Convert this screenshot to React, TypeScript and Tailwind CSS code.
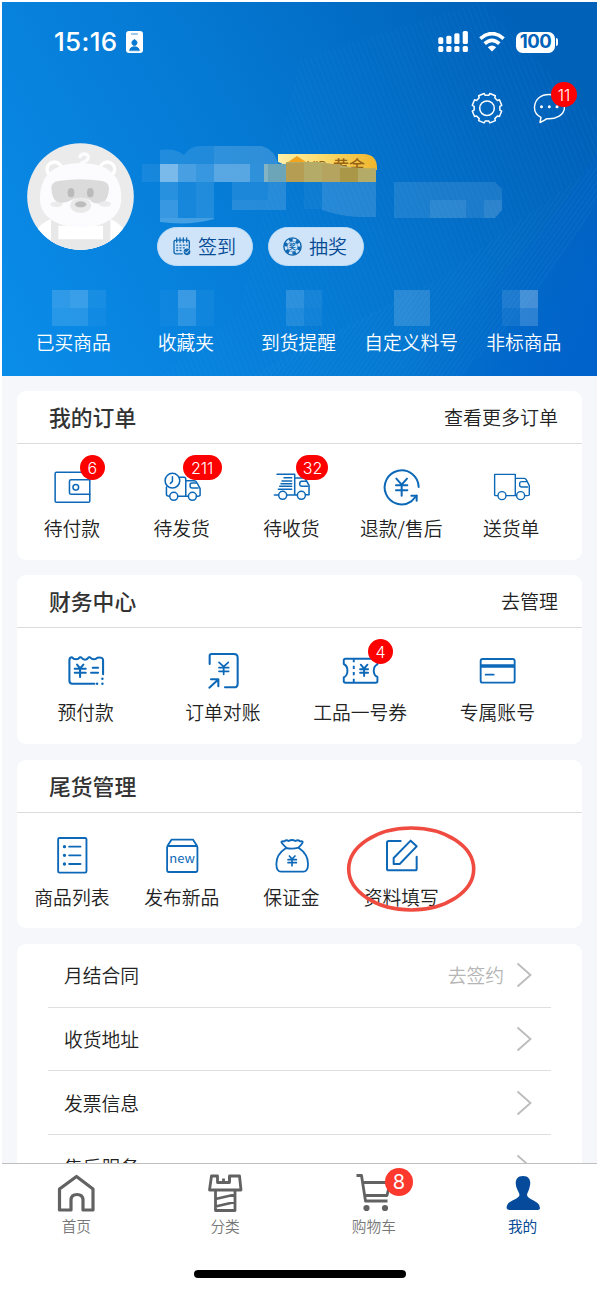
import React from "react";

type IconProps = { box: string; w?: number; children: React.ReactNode };

function LineIcon({ box, w = 5, children }: IconProps) {
  return (
    <svg viewBox={box} className="block h-10 w-10" fill="none" stroke="#0d69b8" strokeWidth={w} strokeLinecap="round" strokeLinejoin="round">
      {children}
    </svg>
  );
}

const WalletIcon = (
  <LineIcon box="155.6 81 120 120" w={4.6}>
    <rect x="165" y="97" width="104" height="90" rx="4" />
    <path d="M269 119H213q-5 0-5 5V158q0 5 5 5H269" />
    <circle cx="227" cy="142" r="8.5" />
  </LineIcon>
);

const TruckClockIcon = (
  <LineIcon box="484.7 81 120 120" w={4.6}>
    <circle cx="516" cy="122" r="22" />
    <path d="M516 110V124L510 130" />
    <path d="M498 141V163Q498 169 507 169M532 169H563M537 112H551Q556 112 556 118V169M556 122H582Q587 122 590 129L599 146V165Q599 169 588 169" />
    <path d="M593 144H575Q569 144 569 138V134Q569 129 575 129H588" />
    <circle cx="520" cy="169" r="12" />
    <circle cx="576" cy="169" r="12" />
  </LineIcon>
);

const TruckFastIcon = (
  <LineIcon box="63.9 81 120 120" w={4.6}>
    <path d="M82 103H135V165M103 113H126M97 123H126M94 131H126M90 139H126M86 148H126M74 165H86M112 165H142M135 114H162Q166 114 169 120L178 136V164H168" />
    <path d="M174 139H157Q151 139 150 134Q149 125 155 124H168" />
    <circle cx="99" cy="166" r="12" />
    <circle cx="155" cy="166" r="12" />
  </LineIcon>
);

const RefundIcon = (
  <LineIcon box="393 81 120 120" w={6}>
    <path d="M506 141A51 51 0 1 0 484 184L500 167" />
    <path d="M484 167H500V182" />
    <path d="M439 116L455 134L471 116M455 134V167M438 136H472M438 151H472" />
  </LineIcon>
);

const TruckIcon = (
  <LineIcon box="722.1 81 120 120" w={4.2}>
    <path d="M742 167H736Q733 167 733 164V103H795V167M768 167H799M795 115H822Q826 115 829 121L837 137V164Q837 167 824 167" />
    <path d="M832 141H815Q808 141 808 136V131Q808 125 815 125H828" />
    <circle cx="755" cy="167" r="12" />
    <circle cx="811" cy="167" r="12" />
  </LineIcon>
);

const PrepayIcon = (
  <LineIcon box="196.8 64 120 120" w={6.2}>
    <path d="M282 162H216Q207 162 207 153V92Q207 83 215 83Q219 89 227 89Q234 89 238 83H242Q248 90 254 90Q261 90 265 83H269Q274 89 281 89Q287 89 291 84Q308 81 308 92V134" />
    <path d="M230 105L239 116L249 105M223 117H256M223 129H256M239 116V142M277 114H293M272 129H293" />
    <path d="M306 147V147.1M290 162V162.1M306 162V162.1" strokeWidth="7.5" />
  </LineIcon>
);

const BillIcon = (
  <LineIcon box="608 64 120 120" w={6.2}>
    <path d="M628 103V78Q628 73 634 73H701Q712 73 712 84V162Q712 173 701 173H674" />
    <path d="M627 174L653 150M632 149H654V170" />
    <path d="M656 98L670 111L684 98M656 114H685M656 125H685M670 111V134" strokeWidth="5.2" />
  </LineIcon>
);

const CouponIcon = (
  <LineIcon box="179.7 64 120 120" w={5.8}>
    <path d="M191 101V92Q191 87 196 87H287Q292 87 292 92V104Q281 109 281 123Q281 137 292 142V155Q292 159 287 159H196Q191 159 191 155V143Q202 138 202 123Q202 108 191 103Z" />
    <path d="M221 89V98M221 108V118M221 127V137M221 147V157" strokeLinecap="butt" />
    <path d="M242 105L252 117L262 105M240 119H264M240 129H264M252 117V139" />
  </LineIcon>
);

const CardIcon = (
  <LineIcon box="591 64 120 120" w={5.6}>
    <rect x="602" y="88" width="102" height="71" rx="6" />
    <path d="M602 109H704" strokeWidth="10" strokeLinecap="butt" />
    <path d="M617 135H641" />
  </LineIcon>
);

const ListIcon = (
  <LineIcon box="155.6 47 120 120" w={5.6}>
    <rect x="174" y="53" width="85" height="104" rx="4" />
    <path d="M207 79H241M207 105H241M207 131H241" />
    <path d="M193 79V79.1M193 105V105.1M193 131V131.1" strokeWidth="10" />
  </LineIcon>
);

const NewIcon = (
  <LineIcon box="484.7 47 120 120" w={5.4}>
    <path d="M501 77L513 58H578L590 77M504 77H587Q591 77 591 81V150Q591 155 586 155H505Q500 155 500 150V81Q500 77 504 77Z" />
    <text x="545" y="129" textAnchor="middle" fontSize="39" fill="#0d69b8" stroke="none" className="font-['Noto_Sans_CJK_SC',sans-serif] font-normal">new</text>
  </LineIcon>
);

const BagIcon = (
  <LineIcon box="93.9 77 120 120" w={5.4}>
    <path d="M139 111Q127 101 125 95Q125 92 134 93Q140 87 147 92Q157 86 167 92Q175 87 181 93Q190 92 189 96Q186 103 177 111" />
    <path d="M139 113Q157 117 177 112Q205 132 205 160Q205 184 191 184H124Q110 184 110 160Q110 132 139 113Z" />
    <path d="M149 137L157 146L166 137M145 148H170M145 157H170M157 146V166" strokeWidth="5" />
  </LineIcon>
);

const EditIcon = (
  <LineIcon box="423 77 120 120" w={6}>
    <path d="M482 92H446Q441 92 441 97V175Q441 180 446 180H526Q530 180 530 175V139" />
    <path d="M512 91L530 108L479 161H461V143Z" />
  </LineIcon>
);

type Item = { label: string; icon: React.ReactNode; badge?: string; badgeClass?: string };

const orders: Item[] = [
  { label: "待付款", icon: WalletIcon, badge: "6", badgeClass: "left-[28px] w-[25px]" },
  { label: "待发货", icon: TruckClockIcon, badge: "211", badgeClass: "left-[21px] w-[39px]" },
  { label: "待收货", icon: TruckFastIcon, badge: "32", badgeClass: "left-[25px] w-[32px]" },
  { label: "退款/售后", icon: RefundIcon },
  { label: "送货单", icon: TruckIcon },
];
const finance: Item[] = [
  { label: "预付款", icon: PrepayIcon },
  { label: "订单对账", icon: BillIcon },
  { label: "工品一号券", icon: CouponIcon, badge: "4", badgeClass: "left-[28px] w-[25px]" },
  { label: "专属账号", icon: CardIcon },
];
const stock: Item[] = [
  { label: "商品列表", icon: ListIcon },
  { label: "发布新品", icon: NewIcon },
  { label: "保证金", icon: BagIcon },
  { label: "资料填写", icon: EditIcon },
];

function Section({ title, more, items, five }: { title: string; more?: string; items: Item[]; five?: boolean }) {
  return (
    <section className="relative h-[168.4px] shrink-0 rounded-[9px] bg-white">
      <div className="flex h-[53px] items-center justify-between border-b border-[#dcdcdc] pr-6 pl-8">
        <h2 className="text-[21.8px] leading-7 font-medium text-[#333]">{title}</h2>
        <span className="text-[19px] font-[350] text-[#222]">{more}</span>
      </div>
      <div className={five ? "mr-4 grid grid-cols-5 pt-[23px]" : "mr-4 grid grid-cols-4 pt-[23px]"}>
        {items.map((it) => (
          <div key={it.label} className="flex flex-col items-center">
            <div className="relative">
              {it.icon}
              {it.badge && (
                <span className={`absolute -top-3 flex h-[25px] items-center justify-center rounded-full bg-[#fe0000] font-['Inter',sans-serif] text-[16px] font-light text-white ${it.badgeClass}`}>
                  {it.badge}
                </span>
              )}
            </div>
            <span className="mt-[7px] text-[18.8px] leading-7 font-[350] whitespace-nowrap text-[#222]">{it.label}</span>
          </div>
        ))}
      </div>
      {title === "尾货管理" && (
        <svg className="absolute top-[65px] left-[328px] h-[88px] w-[132px]" viewBox="345 825 132 88" fill="none">
          <ellipse cx="411.2" cy="869" rx="62.5" ry="41" stroke="#f04b40" strokeWidth="3.6" />
        </svg>
      )}
    </section>
  );
}

const mosaic: [number, number, number, number, string][] = [
  [142, 164, 18, 18, "#fff1"], [160, 164, 18, 18, "#fff7"], [178, 164, 18, 18, "#fff4"], [196, 164, 18, 18, "#fff3"],
  [214, 164, 36, 18, "#fff5"], [250, 164, 18, 18, "#ffffff2c"],
  [160, 182, 18, 18, "#fff2"], [178, 182, 18, 36, "#fff1"], [196, 182, 18, 36, "#ffffff1c"], [160, 200, 18, 18, "#fff3"],
  [232, 182, 36, 18, "#ffffff18"], [232, 200, 54, 10, "#fff2"], [268, 182, 18, 18, "#fff2"],
  [304, 182, 18, 27, "#ffffff0a"],
  [52, 290, 18, 18, "#ffffff28"], [70, 290, 18, 18, "#fff3"], [88, 290, 18, 18, "#fff1"], [52, 308, 36, 18, "#ffffff20"], [88, 308, 18, 18, "#ffffff0a"],
  [160, 290, 18, 36, "#ffffff08"], [178, 290, 18, 18, "#ffffff34"], [178, 308, 18, 18, "#ffffff26"], [196, 290, 18, 36, "#ffffff0a"],
  [286, 290, 18, 18, "#ffffff28"], [304, 290, 18, 18, "#fff1"], [286, 308, 18, 18, "#ffffff1c"], [304, 308, 18, 18, "#ffffff0c"],
  [394, 290, 18, 36, "#ffffff26"], [412, 290, 18, 36, "#ffffff24"],
  [502, 290, 18, 18, "#ffffff1c"], [520, 290, 18, 18, "#fff4"], [502, 308, 18, 18, "#fff1"], [520, 308, 18, 18, "#ffffff2c"],
];

function HeaderArt() {
  return (
    <svg className="absolute inset-0 h-full w-full" viewBox="2 2 595 374">
      <defs>
        <linearGradient id="sky" gradientUnits="userSpaceOnUse" x1="20" y1="370" x2="540" y2="60">
          <stop offset="0" stopColor="#0a8ce9" />
          <stop offset="0.5" stopColor="#057ad4" />
          <stop offset="1" stopColor="#0061b9" />
        </linearGradient>
        <linearGradient id="deep" gradientUnits="userSpaceOnUse" x1="480" y1="250" x2="597" y2="330">
          <stop offset="0" stopColor="#0062cd" stopOpacity="0" />
          <stop offset="1" stopColor="#0062cd" stopOpacity="0.9" />
        </linearGradient>
        <linearGradient id="gold" x1="0" x2="1">
          <stop offset="0" stopColor="#fff0a8" />
          <stop offset="0.5" stopColor="#f9d866" />
          <stop offset="1" stopColor="#f0b52c" />
        </linearGradient>
        <pattern id="rays" width="5" height="8" patternUnits="userSpaceOnUse" patternTransform="rotate(-22)">
          <path d="M1 0V8" stroke="#38a4ec" strokeWidth="0.8" opacity="0.13" />
        </pattern>
        <pattern id="rays2" width="4" height="8" patternUnits="userSpaceOnUse" patternTransform="rotate(35)">
          <path d="M1 0V8" stroke="#38a4ec" strokeWidth="0.8" opacity="0.2" />
        </pattern>
      </defs>
      <rect x="2" y="2" width="595" height="374" fill="url(#sky)" />
      <path d="M350 376Q520 290 597 150V376Z" fill="url(#deep)" />
      <path d="M300 60L480 2L597 120V165L440 278L270 376H160L240 310Z" fill="url(#rays)" />
      <path d="M597 165L440 278L250 376H460Q550 290 597 200Z" fill="url(#rays2)" />

      <path d="M278 154H363Q377 154 377 168V170H290Q283 163 278 162Z" fill="url(#gold)" />
      <path d="M288 162L297 156L306 162V168H288Z" fill="#f2a41c" />
      <text x="307" y="170" fontSize="12" fill="#9a6415" className="font-['Inter',sans-serif]">VIP</text>
      <text x="333" y="172" fontSize="16" fill="#9a6415" className="font-medium">黄金</text>
      <path d="M264 164H286V182H264Z" fill="#6ba5b7" />
      <path d="M286 162H320L340 165Q355 169 376 168V182H286Z" fill="#b5ab68" />
      <rect x="286" y="163" width="18" height="19" fill="#b59e54" />
      <rect x="322" y="164" width="18" height="18" fill="#b4a45f" />
      <rect x="340" y="168" width="18" height="14" fill="#aa9848" />
      <path d="M160 150Q175 148 184 155Q190 146 200 146H262Q275 150 278 164H160Z" fill="#ffffff1c" />
      <path d="M214 146H262Q275 150 278 164H214Z" fill="#ffffff12" />
      {mosaic.map(([x, y, w, h, c], i) => (
        <rect key={i} x={x} y={y} width={w} height={h} fill={c} />
      ))}
      <path d="M322 182H376V217H358Q340 216 322 210Z" fill="#ffffff22" />
      <path d="M160 218H214V219Q190 226 160 222Z" fill="#ffffff40" />
      <path d="M394 182H495L502 189V210L495 218H394Z" fill="#ffffff1a" />
      <path d="M430 200H466V218H430ZM484 200H502V210L495 218H484Z" fill="#ffffff14" />
    </svg>
  );
}

function Avatar() {
  return (
    <svg className="block h-[107px] w-[107px]" viewBox="81 38 321 321">
      <defs><clipPath id="disc"><circle cx="241.5" cy="198.5" r="160" /></clipPath></defs>
      <g clipPath="url(#disc)">
        <rect x="81" y="38" width="321" height="321" fill="#ebebeb" />
        <path d="M90 330Q120 268 170 262H320Q365 275 395 330V359H90Z" fill="#fff" />
        <path d="M153 260H331V359H153Z" fill="#e8e8e9" />
        <path d="M175 286H309V327H175Z" fill="#fff" />
        <circle cx="163" cy="117" r="22" fill="#ebebeb" stroke="#fff" strokeWidth="10" />
        <circle cx="322" cy="117" r="22" fill="#ebebeb" stroke="#fff" strokeWidth="10" />
        <path d="M120 205C120 140 155 98 242 98S364 140 364 205C364 260 310 291 242 291S120 260 120 205Z" fill="#fcfcfe" />
        <path d="M240 79Q243 71 254 71Q266 72 265 83Q262 92 244 98" fill="none" stroke="#fcfcfe" strokeWidth="10" strokeLinecap="round" />
        <path d="M154 172Q155 155 175 152Q242 141 306 152Q327 156 327 173Q326 208 308 217Q280 224 270 209Q242 196 214 209Q195 221 173 217Q155 204 154 172Z" fill="#dbdbdc" />
        <ellipse cx="169" cy="222" rx="18" ry="8" fill="#ebebeb" />
        <ellipse cx="315" cy="221" rx="18" ry="8" fill="#ebebeb" />
        <ellipse cx="242" cy="225" rx="32" ry="23" fill="#e9e9ea" />
        <ellipse cx="242" cy="222" rx="17" ry="9" fill="#bdbdbe" />
        <ellipse cx="213" cy="187" rx="10" ry="14" fill="#bababb" />
        <ellipse cx="271" cy="187" rx="10" ry="14" fill="#bababb" />
      </g>
    </svg>
  );
}

function gearPath(cx: number, cy: number) {
  const pts: string[] = [];
  for (let i = 0; i < 8; i++) {
    const base = (i * Math.PI) / 4 + Math.PI / 8;
    ([[-0.25, 13], [-0.2, 15], [0.2, 15], [0.25, 13]] as const).forEach(([d, r]) => {
      pts.push(`${(cx + r * Math.cos(base + d)).toFixed(2)} ${(cy + r * Math.sin(base + d)).toFixed(2)}`);
    });
  }
  return `M${pts.join("L")}Z`;
}

function Header() {
  const stats = ["已买商品", "收藏夹", "到货提醒", "自定义料号", "非标商品"];
  return (
    <header className="relative h-[374px] shrink-0 text-white">
      <HeaderArt />
      <div className="relative flex h-full flex-col">
        <div className="flex h-[80px] items-center justify-between pr-[39px] pl-[52px]">
          <div className="flex items-center">
            <span className="w-[72px] font-['Inter',sans-serif] text-[26px] leading-8 font-medium tracking-[0.3px]">15:16</span>
            <svg className="h-[22px] w-[17px]" viewBox="0 0 17 22">
              <rect width="17" height="22" rx="3" fill="#fff" />
              <path d="M5.5 3H11.5M8.5 8.8A2.6 2.9 0 1 1 8.4 8.8ZM3.7 19.3Q4 15.8 8.5 15.8T13.3 19.3Z" fill="#0779d2" stroke="#0779d2" strokeWidth="0.8" strokeLinecap="round" />
            </svg>
          </div>
          <div className="flex items-center">
            <svg className="h-[22px] w-[30px]" viewBox="437 31 30 22" fill="#fff">
              <rect x="437.3" y="37.3" width="5" height="6.7" rx="1.5" /><rect x="445.3" y="35.7" width="5.2" height="8.3" rx="1.5" />
              <rect x="453.3" y="33.3" width="5.2" height="10.7" rx="1.5" /><rect x="461.7" y="31" width="5.2" height="13" rx="1.5" />
              <rect x="437.3" y="46" width="5" height="6" rx="1.6" /><rect x="445.3" y="46" width="5.2" height="6" rx="1.6" />
              <rect x="453.3" y="46" width="5.2" height="6" rx="1.6" /><rect x="461.7" y="46" width="5.2" height="6" rx="1.6" />
            </svg>
            <svg className="ml-[11px] h-[20px] w-[26px]" viewBox="0 0 26 20" fill="none" stroke="#fff" strokeWidth="3.6">
              <path d="M1.4 6.6Q13 -3.4 24.6 6.6M5.7 11.6Q13 5 20.3 11.6" />
              <path d="M13 19.5L8.8 15.2Q13 11.8 17.2 15.2Z" fill="#fff" stroke="none" />
            </svg>
            <span className="ml-[11px] flex h-[21px] w-[39px] items-center justify-center rounded-[6.5px] bg-white font-['Inter',sans-serif] text-[18.5px] font-bold tracking-[-0.5px] text-[#0062b8]">100</span>
            <span className="ml-px h-2 w-0.5 rounded-r-full bg-white" />
          </div>
        </div>
        <div className="flex h-[52px] items-center justify-end gap-[30px] pr-[32px]">
          <svg className="h-8 w-8" viewBox="470.5 92 32 32" fill="none" stroke="#fff" strokeWidth="1.5" strokeLinejoin="round">
            <path d={gearPath(486.5, 108.2)} />
            <circle cx="486.5" cy="108.2" r="7.3" />
          </svg>
          <div className="relative">
            <svg className="h-8 w-8" viewBox="533 92 32 32" fill="none" stroke="#fff" strokeWidth="1.4" strokeLinejoin="round">
              <path d="M540 122.5L541 117.3C536.5 115 534.3 111 534.5 107C535 99 541 94.5 549 94.5C558 94.5 564.5 100 564.5 107C564.5 115 556 119.3 547 118.6Q543.5 121 540 122.5Z" />
              <path d="M541.5 106.7V106.8M549.3 106.7V106.8M557 106.7V106.8" strokeWidth="3" strokeLinecap="round" />
            </svg>
            <span className="absolute -top-[10px] left-[18px] flex h-[25px] w-[26px] items-center justify-center rounded-full bg-[#fe0000] font-['Inter',sans-serif] text-[16px] font-light">11</span>
          </div>
        </div>
        <div className="flex h-[138px] pt-[9px] pl-[25px]">
          <Avatar />
          <div className="mt-[84px] ml-[23px] flex h-[39px] gap-[15px] text-[19px] font-[350] text-[#064a96]">
            <div className="flex w-[96px] items-center rounded-full border border-[#bcdcf6] bg-[#cfe4f8] pl-[15px]">
              <svg className="h-[19px] w-[18px]" viewBox="520 322 54 56" fill="none" stroke="#1169b3" strokeWidth="4" strokeLinecap="round">
                <path d="M548 372H529Q523 372 523 366V337Q523 331 529 331H563Q569 331 569 337V355M531 324V337M541 324V337M551 324V337M561 324V337M531 346H534M541 346H544M551 346H554M560 346H563M531 354H534M541 354H544M551 354H554M531 362H534M541 362H544" />
                <circle cx="562" cy="366" r="10" fill="#1169b3" stroke="none" /><path d="M557 366L561 370L567 362" stroke="#fff" strokeWidth="2.5" />
              </svg>
              <span className="ml-[7px]">签到</span>
            </div>
            <div className="flex w-[96px] items-center rounded-full border border-[#bcdcf6] bg-[#cfe4f8] pl-[14px]">
              <svg className="h-[19px] w-[19px]" viewBox="0 0 56 56">
                <circle cx="28" cy="28" r="25.5" fill="none" stroke="#0d66ae" strokeWidth="4" />
                <circle cx="28" cy="28" r="20" fill="none" stroke="#0d66ae" strokeWidth="9" strokeDasharray="10.47 10.47" />
                <circle cx="28" cy="28" r="15" fill="none" stroke="#0d66ae" strokeWidth="1.5" />
                <text x="28" y="35.5" textAnchor="middle" fontSize="20" fontWeight="700" fill="#0d66ae">奖</text>
              </svg>
              <span className="ml-[7px]">抽奖</span>
            </div>
          </div>
        </div>
        <div className="grid grid-cols-5 pt-[56px] pr-[17px] pl-[15px]">
          {stats.map((s) => (
            <span key={s} className="text-center text-[18.8px] leading-7 font-[350] whitespace-nowrap">{s}</span>
          ))}
        </div>
      </div>
    </header>
  );
}

const rows = ["月结合同", "收货地址", "发票信息", "售后服务"];

function TabBar() {
  const tab = "flex flex-col items-center pt-[9px] text-[14.7px] font-[350] text-[#777]";
  return (
    <nav className="grid h-[132px] shrink-0 grid-cols-4 content-start border-t border-[#bfbfbf] bg-white">
      <div className={tab}>
        <svg className="h-10 w-10" viewBox="0 0 40 40" fill="none" stroke="#626262" strokeWidth="3.2" strokeLinejoin="round">
          <path d="M3.5 37V16L20.5 3.5L37 16V37H27V26.5Q26.5 21.5 21 21.5T15 26.5V37Z" />
        </svg>
        <span className="mt-px leading-6">首页</span>
      </div>
      <div className={tab}>
        <svg className="h-10 w-10" viewBox="0 0 40 40" fill="none" stroke="#626262" strokeWidth="2.8" strokeLinejoin="round">
          <path d="M6.5 3H12.5V9.5H24.5V3H34.5L36 17H4.5ZM10.5 17V37.5H30V17M10.5 26L30 21.5M10.5 33.5L30 29" />
          <path d="M18.5 5.5V9M24.5 3.5V9" />
        </svg>
        <span className="mt-px leading-6">分类</span>
      </div>
      <div className={tab}>
        <div className="relative">
          <svg className="h-10 w-10" viewBox="0 0 40 40" fill="none" stroke="#626262" strokeWidth="2.8" strokeLinejoin="round">
            <path d="M2.5 2.5H7.5L11.5 28H33.5M9 9.5H36L33 22.5H11" />
            <circle cx="12.5" cy="35" r="3.1" fill="#626262" stroke="none" /><circle cx="31" cy="35" r="3.1" fill="#626262" stroke="none" />
          </svg>
          <span className="absolute -top-[5px] left-[31px] flex h-[28px] w-[28px] items-center justify-center rounded-full bg-[#fd382c] font-['Inter',sans-serif] text-[20px] font-normal text-white">8</span>
        </div>
        <span className="mt-px leading-6">购物车</span>
      </div>
      <div className="flex flex-col items-center pt-[9px] text-[14.7px] text-[#064a96]">
        <svg className="h-10 w-10" viewBox="0 0 40 40" fill="#064b9b">
          <path d="M20 3C12 3 12 10 13.5 14.5C14.5 18 16.5 20 16.5 22C16 25.5 9 27 5.5 30Q3.5 32 3.5 35Q4 37 7 37H33.5Q37 37 37 35Q37 32 34.5 30C31 27 24.5 25.5 24 22C24 20 26 18 26.5 14.5C28 10 28 3 20 3Z" />
        </svg>
        <span className="mt-px leading-6">我的</span>
      </div>
    </nav>
  );
}

export default function App() {
  return (
    <div className="relative flex h-[1295px] w-[599px] flex-col overflow-hidden bg-white px-[2px] pt-[2px] font-['Noto_Sans_CJK_SC',sans-serif]">
      <Header />
      <main className="flex h-[787px] shrink-0 flex-col gap-[15.8px] overflow-hidden bg-[#f5f7fa] px-[15px] pt-[15.3px]">
        <Section title="我的订单" more="查看更多订单" items={orders} five />
        <Section title="财务中心" more="去管理" items={finance} />
        <Section title="尾货管理" items={stock} five />
        <section className="shrink-0 rounded-t-[9px] bg-white pr-[31px] pl-[31px]">
          {rows.map((r, i) => (
            <div key={r} className="flex h-[63.8px] items-center border-b border-[#dfdfdf] pr-[19px] pl-4 text-[18.8px] font-[350] text-[#222]">
              <span className="flex-1">{r}</span>
              {i === 0 && <span className="mr-[12px] text-[#b5b5b5]">去签约</span>}
              <svg className="h-[26px] w-4" viewBox="0 0 16 26" fill="none" stroke="#bbb" strokeWidth="1.8">
                <path d="M1.5 1.5L14.5 13L1.5 24.5" />
              </svg>
            </div>
          ))}
        </section>
      </main>
      <TabBar />
      <div className="absolute top-[1270px] left-[194px] h-2 w-[212px] rounded-full bg-black" />
    </div>
  );
}
